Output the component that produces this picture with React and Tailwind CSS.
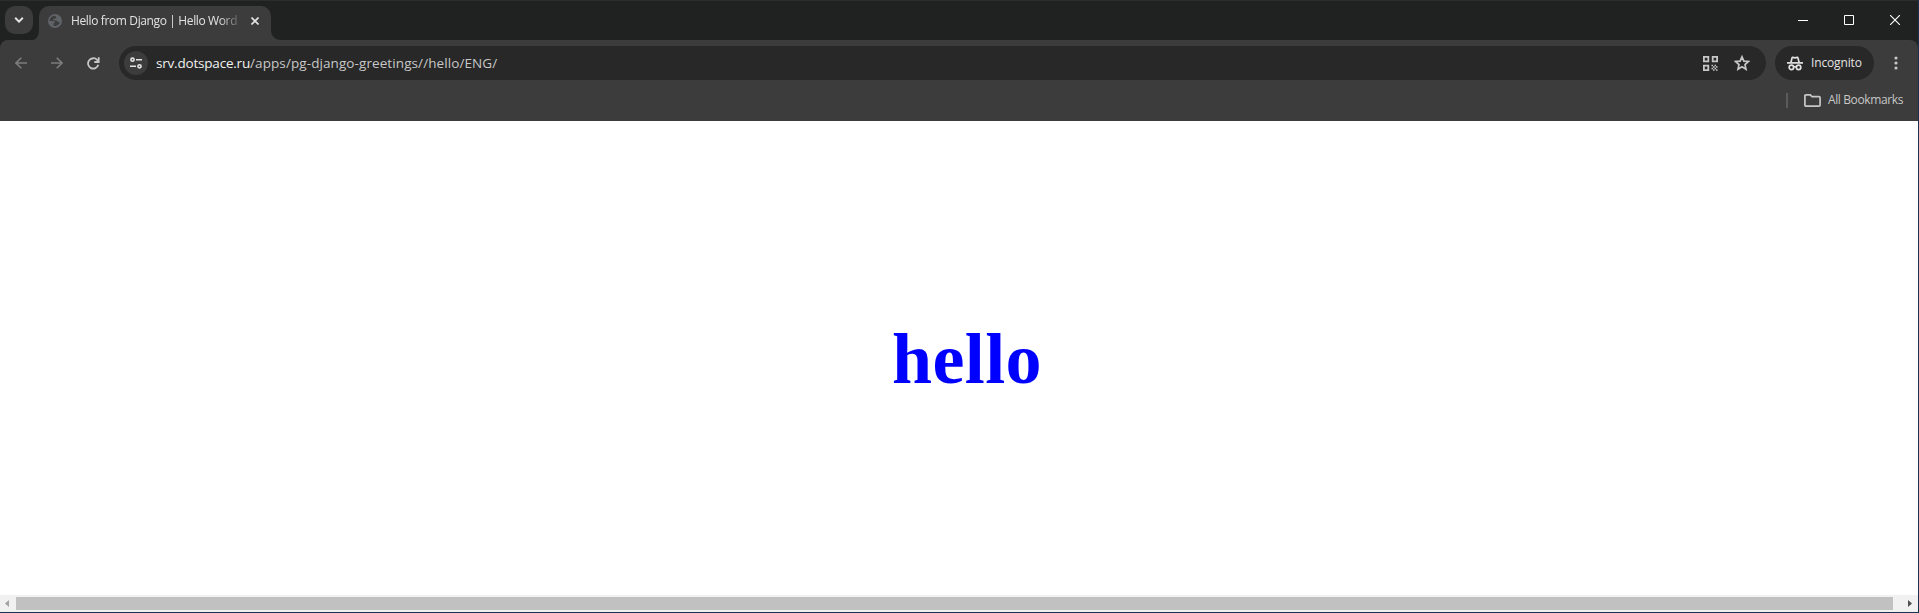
import React from "react";

function TabStrip() {
  return (
    <div className="flex h-10 items-start bg-[#202221] border-t border-[#2b2d2c]">
      <div className="ml-[5px] mt-[5px] flex h-7 w-7 items-center justify-center rounded-[10px] bg-[#3c3c3c]">
        <svg width="10" height="6" viewBox="0 0 10 6" fill="none" stroke="#e3e3e3" strokeWidth="2">
          <path d="M1.2 .8 5 4.6 8.8 .8" />
        </svg>
      </div>
      <svg className="mt-[29px] shrink-0" width="6" height="10" viewBox="0 0 6 10" fill="#3c3c3c">
        <path d="M6 0v10H0C4 9 6 5 6 0Z" />
      </svg>
      <div className="mt-[5px] flex h-[34px] w-[232px] items-center rounded-t-[10px] bg-[#3c3c3c] pb-[5px]">
        <svg className="ml-[9px] shrink-0" width="14" height="14" viewBox="0 0 14 14">
          <circle cx="7" cy="7" r="7" fill="#5f6368" />
          <path d="M6.2 1.8c-2.8.6-4.600 2.600-4.600 5.200h3.200c1.400 0 2.200.8 2.200 2.100h-1.400v2.900c2.900.3 5.700-1.200 6.500-4.200-.8.7-1.500.6-2.200.1-.6-.5-.7-1.500-1.700-1.500H5.300V4.700h1.500c.7 0 .7-.7 1.300-1 .6-.4 0-1.400-1.900-1.900Z" fill="#3c3c3c" />
        </svg>
        <div className="ml-[9px] w-[169px] whitespace-nowrap text-[12px] leading-5 tracking-[-0.37px] text-[#e3e3e3] [mask-image:linear-gradient(to_right,black_148px,transparent_172px)]">
          Hello from Django | Hello Word
        </div>
        <svg className="ml-[11px] shrink-0" width="8" height="8" viewBox="0 0 8 8" stroke="#e3e3e3" strokeWidth="1.6">
          <path d="M.5 .5l7 7M7.500 .5l-7 7" />
        </svg>
      </div>
      <svg className="mt-[29px] shrink-0" width="10" height="10" viewBox="0 0 10 10" fill="#3c3c3c">
        <path d="M0 0v10h10C4 10 0 6 0 0Z" />
      </svg>
      <div className="ml-auto mr-[18px] mt-[14px] flex items-center gap-9">
        <svg width="10" height="10" viewBox="0 0 10 10" stroke="#fff"><path d="M0 5.500h10" /></svg>
        <svg width="10" height="10" viewBox="0 0 10 10" fill="none" stroke="#fff"><path d="M.5 .5h9v9h-9z" /></svg>
        <svg width="10" height="10" viewBox="0 0 10 10" stroke="#fff" strokeWidth="1.100"><path d="M0 0l10 10M10 0 0 10" /></svg>
      </div>
    </div>
  );
}

function Toolbar() {
  return (
    <div className="flex h-[46px] items-center pl-[15px] pr-5">
      <svg width="12" height="12" viewBox="0 0 12 12" fill="none" stroke="#7c7c7c" strokeWidth="1.600"><path d="M12 6H1M6.300 .7 1 6l5.300 5.300" /></svg>
      <svg className="ml-6" width="12" height="12" viewBox="0 0 12 12" fill="none" stroke="#7c7c7c" strokeWidth="1.600"><path d="M0 6h11M5.700 .7 11 6l-5.300 5.300" /></svg>
      <svg className="ml-6" width="13" height="13" viewBox="0 0 13 13" fill="none" stroke="#c7c7c7" strokeWidth="1.800"><path d="M11.300 7.800A5.200 5.200 0 1 1 10.200 3L11.600 4.800M11.700 .3v4.700H7.300" /></svg>
      <div className="ml-[19px] flex h-[34px] w-[1647px] items-center rounded-full bg-[#282828] pl-[5px] pr-4">
        <div className="flex h-6 w-6 items-center justify-center rounded-full bg-[#3c3c3c]">
          <svg width="12" height="12" viewBox="0 0 12 12" fill="none" stroke="#e3e3e3" strokeWidth="1.600">
            <circle cx="2.500" cy="2.700" r="1.600" /><path d="M6 2.700h6M0 9.300h6" /><circle cx="9.500" cy="9.300" r="1.600" />
          </svg>
        </div>
        <div className="ml-2 whitespace-nowrap text-[13.5px] leading-5 tracking-[0.09px] text-[#c7c7c7]">
          <span className="tracking-[-0.2px] text-[#f1f1f1]">srv.dotspace.ru</span>/apps/pg-django-greetings//hello/ENG/
        </div>
        <svg className="ml-auto" width="15" height="15" viewBox="0 0 15 15" fill="none" stroke="#c7c7c7" strokeWidth="1.800">
          <path d="M.9 .9h4.400v4.400H.9zM9.700 .9h4.400v4.400H9.700zM.9 9.700h4.400v4.400H.9z" />
          <path strokeWidth="1.500" d="M8.500 9.500H10M10 11h1.500M11.500 9.500H13M13 11h1.500M8.500 12.500H10M11.500 12.500H13M10 14h1.500M13 14h1.500" />
        </svg>
        <svg className="ml-4" width="16" height="16" viewBox="0 0 16 16" fill="none" stroke="#c7c7c7" strokeWidth="1.700">
          <path d="m8 1.800 1.900 4.300 4.600.4-3.500 3.100 1 4.600L8 11.800l-4 2.400 1-4.600-3.500-3.100 4.600-.4Z" />
        </svg>
      </div>
      <div className="ml-[9px] flex h-[34px] w-[99px] items-center rounded-full bg-[#282828] pl-3">
        <svg width="16" height="15" viewBox="0 0 16 15" fill="none" stroke="#e3e3e3" strokeWidth="1.700">
          <path d="M0 6.900h16" />
          <path fill="#e3e3e3" stroke="none" d="M3 6.500 4.300 1.500Q4.700 .2 6 .5L8 1 10 .5q1.300-.3 1.700 1L13 6.500h-1.800L10.200 2.200 8 2.800 5.800 2.200 4.800 6.500Z" />
          <circle cx="4.400" cy="11.400" r="2.200" /><circle cx="11.600" cy="11.400" r="2.200" /><path d="M6.600 11c1-.6 1.800-.6 2.800 0" />
        </svg>
        <span className="ml-2 text-[12px] leading-5 tracking-[-0.15px] text-[#e3e3e3]">Incognito</span>
      </div>
      <svg className="ml-auto" width="4" height="14" viewBox="0 0 4 14" fill="#c7c7c7"><circle cx="2" cy="2" r="1.600" /><circle cx="2" cy="7" r="1.600" /><circle cx="2" cy="12" r="1.600" /></svg>
    </div>
  );
}

export default function App() {
  return (
    <div className="flex h-[613px] w-[1919px] flex-col overflow-hidden border-b border-r border-[#17344c] bg-white font-['Open_Sans','Noto_Sans',sans-serif]">
      <TabStrip />
      <div className="bg-[#202221]">
        <div className="h-[81px] rounded-t-[8px] bg-[#3c3c3c]">
          <Toolbar />
          <div className="flex h-[28px] items-center justify-end pr-[15px]">
            <div className="h-[15px] w-[2px] bg-[#5b5b5b]" />
            <svg className="ml-4" width="17" height="13" viewBox="0 0 17 13" fill="none" stroke="#c7c7c7" strokeWidth="1.700"><path d="M.9 11V2Q.9 .9 2 .9H6.300L8 2.600h7Q16.100 2.600 16.100 3.700V11Q16.100 12.100 15 12.100H2Q.9 12.100 .9 11Z" /></svg>
            <span className="ml-[7px] w-[75px] whitespace-nowrap text-[12px] leading-5 tracking-[-0.38px] text-[#c7c7c7]">All Bookmarks</span>
          </div>
        </div>
      </div>
      <main className="flex flex-1 items-start justify-center pl-[16px] pt-[197px]">
        <h1 className="font-['Liberation_Serif',serif] text-[72px] font-bold leading-[82px] tracking-[0.4px] text-[#0000ff]">hello</h1>
      </main>
      <div className="flex h-[17px] shrink-0 items-center bg-[#f1f1f1]">
        <svg className="ml-[5px]" width="4" height="7" viewBox="0 0 4 7" fill="#a3a3a3"><path d="M4 0v7L0 3.500z" /></svg>
        <div className="ml-[7px] h-[13px] w-[1877px] bg-[#c1c1c1]" />
        <svg className="ml-[15px]" width="4" height="7" viewBox="0 0 4 7" fill="#505050"><path d="M0 0v7l4-3.500z" /></svg>
      </div>
    </div>
  );
}
